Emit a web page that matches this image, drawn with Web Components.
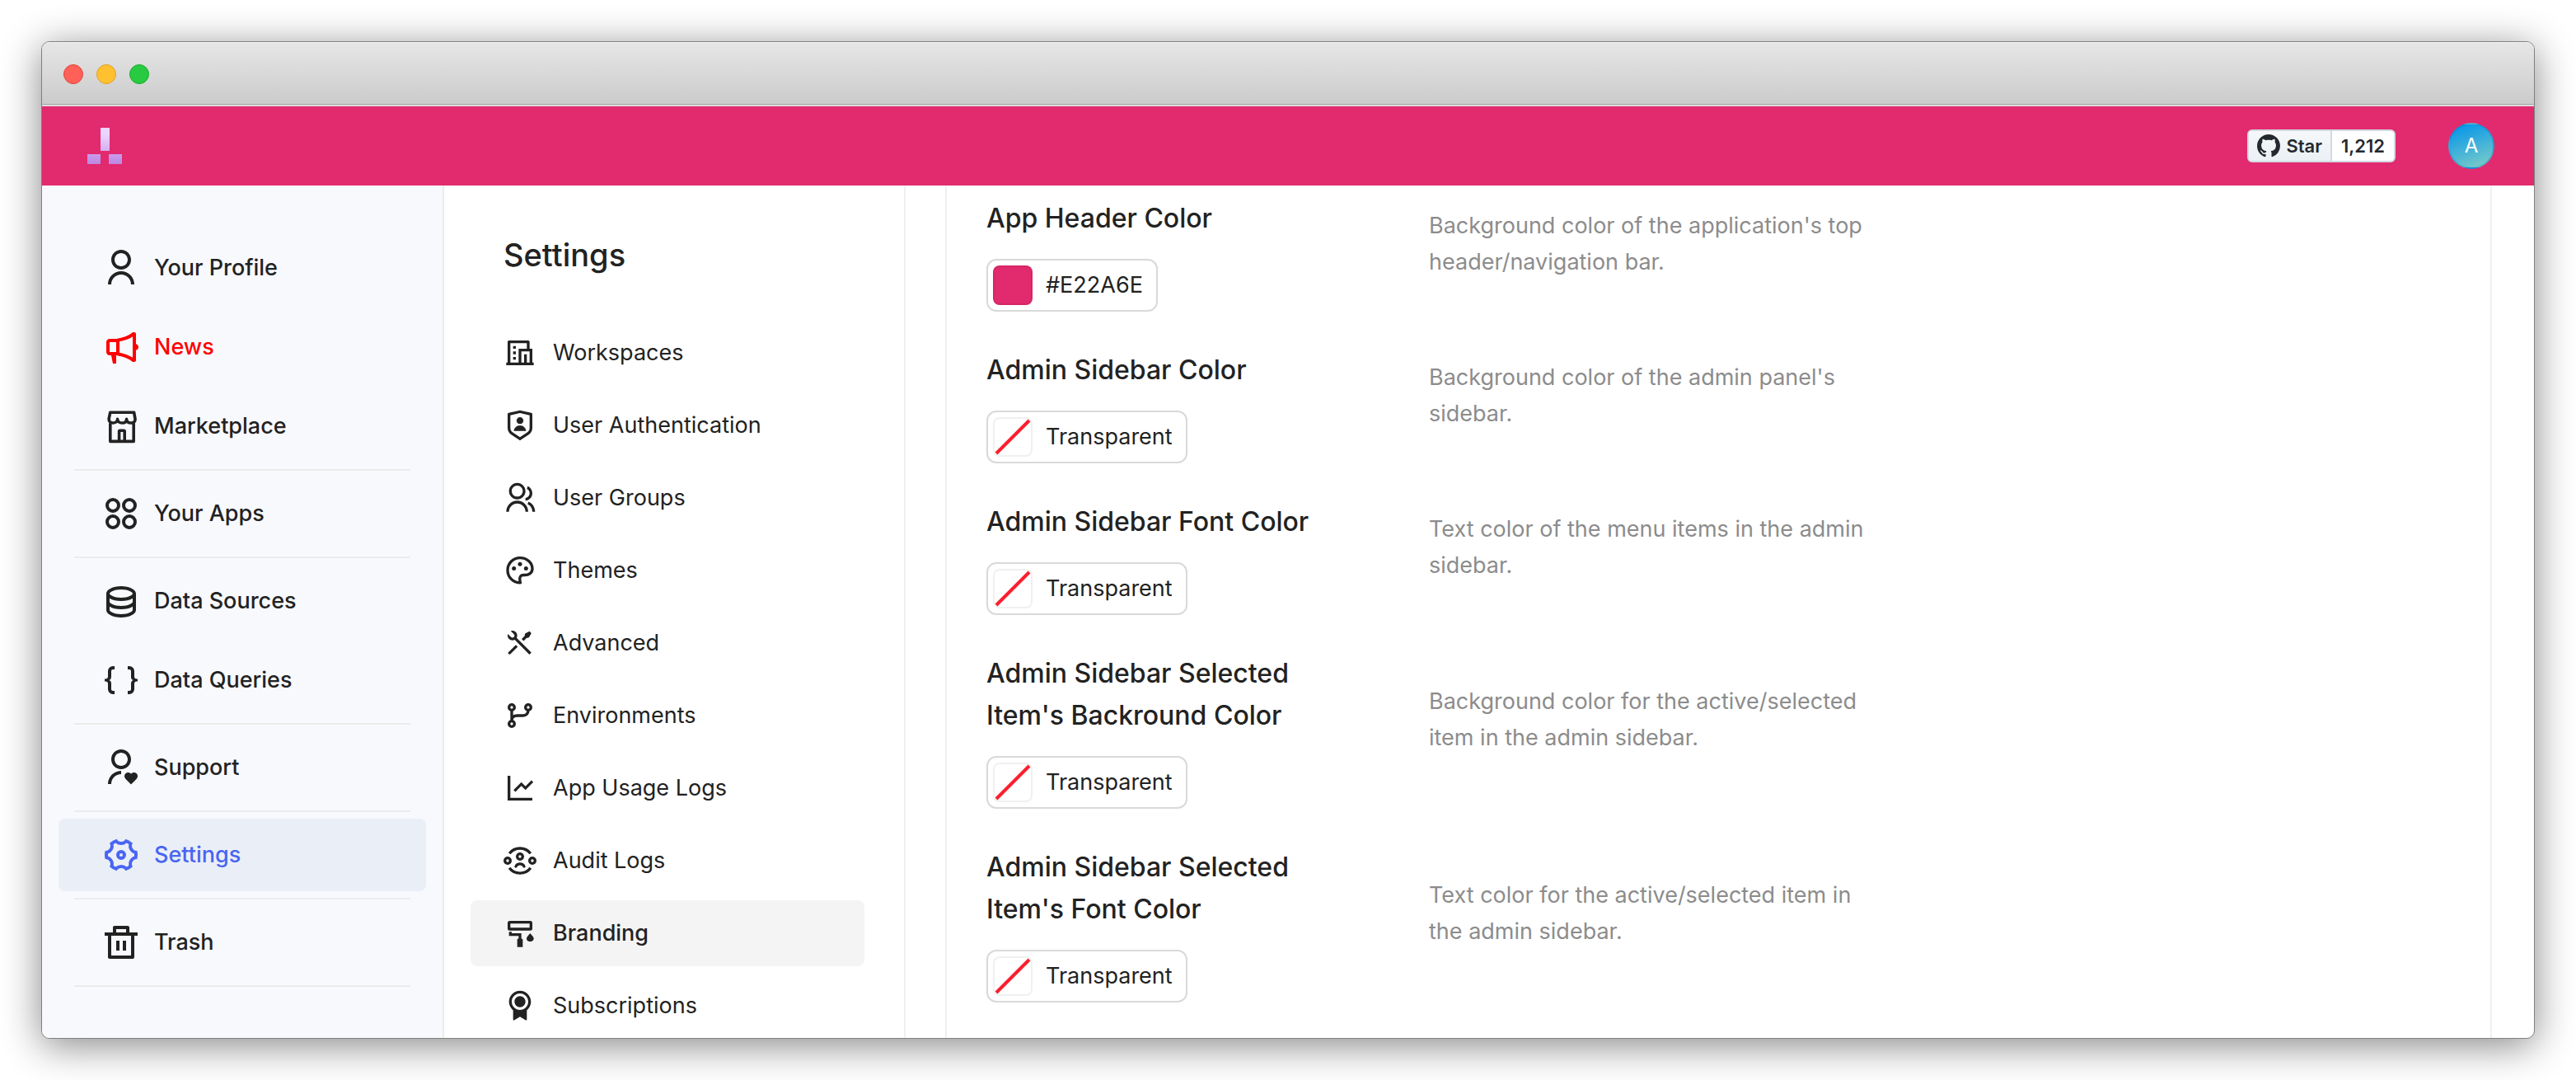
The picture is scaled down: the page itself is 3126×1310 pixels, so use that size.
<!DOCTYPE html>
<html lang="en">
<head>
<meta charset="utf-8">
<title>Settings – Branding</title>
<style>
  html { background: #fff; }
  body {
    margin: 0;
    padding: 50px;
    box-sizing: border-box;
    height: 100vh;
    overflow: hidden;
    font-family: Inter, "Liberation Sans", sans-serif;
    font-size: 27px;
    line-height: 44px;
    color: #222;
    --text: #222;
    --brand: #e22a6e;
    --line: #f0f0f0;
    -webkit-font-smoothing: antialiased;
  }
</style>
</head>
<body>
<browser-window>
  <app-header stars="1,212" initial="A"></app-header>
  <admin-shell>
    <side-nav slot="nav">
      <nav-item icon="user">Your Profile</nav-item>
      <nav-item icon="megaphone" tone="alert">News</nav-item>
      <nav-item icon="store">Marketplace</nav-item>
      <nav-divider></nav-divider>
      <nav-item icon="apps">Your Apps</nav-item>
      <nav-divider></nav-divider>
      <nav-item icon="database">Data Sources</nav-item>
      <nav-item icon="braces">Data Queries</nav-item>
      <nav-divider></nav-divider>
      <nav-item icon="support">Support</nav-item>
      <nav-divider></nav-divider>
      <nav-item icon="gear" selected>Settings</nav-item>
      <nav-divider></nav-divider>
      <nav-item icon="trash">Trash</nav-item>
      <nav-divider></nav-divider>
    </side-nav>
    <settings-menu slot="menu" heading="Settings">
      <menu-entry icon="building">Workspaces</menu-entry>
      <menu-entry icon="shield">User Authentication</menu-entry>
      <menu-entry icon="group">User Groups</menu-entry>
      <menu-entry icon="palette">Themes</menu-entry>
      <menu-entry icon="tools">Advanced</menu-entry>
      <menu-entry icon="branch">Environments</menu-entry>
      <menu-entry icon="chart">App Usage Logs</menu-entry>
      <menu-entry icon="audit">Audit Logs</menu-entry>
      <menu-entry icon="roller" selected>Branding</menu-entry>
      <menu-entry icon="award">Subscriptions</menu-entry>
    </settings-menu>
    <branding-panel>
      <color-field label="App Header Color" value="#E22A6E">Background color of the application's top header/navigation bar.</color-field>
      <color-field label="Admin Sidebar Color">Background color of the admin panel's sidebar.</color-field>
      <color-field label="Admin Sidebar Font Color">Text color of the menu items in the admin sidebar.</color-field>
      <color-field label="Admin Sidebar Selected Item's Backround Color">Background color for the active/selected item in the admin sidebar.</color-field>
      <color-field label="Admin Sidebar Selected Item's Font Color">Text color for the active/selected item in the admin sidebar.</color-field>
    </branding-panel>
  </admin-shell>
</browser-window>

<script>
const USER_HEAD = 'M12 13C8.685 13 6 10.315 6 7C6 3.685 8.685 1 12 1C15.315 1 18 3.685 18 7C18 10.315 15.315 13 12 13ZM12 11C14.21 11 16 9.21 16 7C16 4.79 14.21 3 12 3C9.79 3 8 4.79 8 7C8 9.21 9.79 11 12 11Z';
const fill = d => `<path d="${d}"/>`;
const stroke = (body, w = 2) => `<g fill="none" stroke="currentColor" stroke-width="${w}">${body}</g>`;

const ICONS = {
  user: fill('M4 22C4 17.5817 7.58172 14 12 14C16.4183 14 20 17.5817 20 22H18C18 18.6863 15.3137 16 12 16C8.68629 16 6 18.6863 6 22H4Z' + USER_HEAD),
  megaphone: fill('M9 17C9 17 16 18 19 21H20C20.5523 21 21 20.5523 21 20V13.937C21.8626 13.715 22.5 12.9319 22.5 12C22.5 11.0681 21.8626 10.285 21 10.063V4C21 3.44772 20.5523 3 20 3H19C16 6 9 7 9 7H5C3.89543 7 3 7.89543 3 9V15C3 16.1046 3.89543 17 5 17H6L7 22H9V17ZM11 8.6612C11.6833 8.5146 12.5275 8.31193 13.4393 8.04373C15.1175 7.55014 17.25 6.77262 19 5.57458V18.4254C17.25 17.2274 15.1175 16.4499 13.4393 15.9563C12.5275 15.6881 11.6833 15.4854 11 15.3388V8.6612ZM5 9H9V15H5V9Z'),
  store: stroke('<path stroke-linejoin="round" d="M5.4 3.6H19.8L20.5 7.4C20.7 9.1 19.6 10 18.2 10C16.6 10 15.3 9.3 15.3 7.7C15.3 9.3 14.1 10 12.6 10C11.1 10 9.8 9.3 9.8 7.7C9.8 9.3 8.5 10 7 10C5.6 10 4.4 9.1 4.6 7.4ZM5.4 10.2V21.2H19.6V10.2M10.8 21V15.1C10.8 14.8 11 14.6 11.3 14.6H13.6C13.9 14.6 14.1 14.8 14.1 15.1V21"/>', 1.8),
  apps: stroke('<circle cx="7" cy="7" r="3.5"/><circle cx="17" cy="7" r="3.5"/><circle cx="7" cy="17" r="3.5"/><circle cx="17" cy="17" r="3.5"/>'),
  database: fill('M5 12.5C5 12.8134 5.46101 13.3584 6.53047 13.8931C7.91405 14.5849 9.87677 15 12 15C14.1232 15 16.0859 14.5849 17.4695 13.8931C18.539 13.3584 19 12.8134 19 12.5V10.3287C17.35 11.3482 14.8273 12 12 12C9.17273 12 6.64996 11.3482 5 10.3287V12.5ZM19 15.3287C17.35 16.3482 14.8273 17 12 17C9.17273 17 6.64996 16.3482 5 15.3287V17.5C5 17.8134 5.46101 18.3584 6.53047 18.8931C7.91405 19.5849 9.87677 20 12 20C14.1232 20 16.0859 19.5849 17.4695 18.8931C18.539 18.3584 19 17.8134 19 17.5V15.3287ZM3 17.5V7.5C3 5.01472 7.02944 3 12 3C16.9706 3 21 5.01472 21 7.5V17.5C21 19.9853 16.9706 22 12 22C7.02944 22 3 19.9853 3 17.5ZM12 10C14.1232 10 16.0859 9.58492 17.4695 8.89313C18.539 8.3584 19 7.81342 19 7.5C19 7.18658 18.539 6.6416 17.4695 6.10687C16.0859 5.41508 14.1232 5 12 5C9.87677 5 7.91405 5.41508 6.53047 6.10687C5.46101 6.6416 5 7.18658 5 7.5C5 7.81342 5.46101 8.3584 6.53047 8.89313C7.91405 9.58492 9.87677 10 12 10Z'),
  braces: fill('M4 18v-3.7a1.5 1.5 0 0 0-1.5-1.5H2v-1.6h.5A1.5 1.5 0 0 0 4 9.7V6.5a3 3 0 0 1 3-3h1v2H7a1 1 0 0 0-1 1v3.6A2 2 0 0 1 4.626 12 2 2 0 0 1 6 13.9V17.5a1 1 0 0 0 1 1h1v2H7a3 3 0 0 1-3-3zM20 14.3V17.5a3 3 0 0 1-3 3h-1v-2h1a1 1 0 0 0 1-1v-3.6A2 2 0 0 1 19.374 12 2 2 0 0 1 18 10.1V6.5a1 1 0 0 0-1-1h-1v-2h1a3 3 0 0 1 3 3v3.2a1.5 1.5 0 0 0 1.5 1.5h.5v1.6h-.5a1.5 1.5 0 0 0-1.5 1.5z'),
  support: fill('M17.841 15.659L18.017 15.836L18.1945 15.659C19.0732 14.7803 20.4978 14.7803 21.3765 15.659C22.2552 16.5377 22.2552 17.9623 21.3765 18.841L18.0178 22.1997L14.659 18.841C13.7803 17.9623 13.7803 16.5377 14.659 15.659C15.5377 14.7803 16.9623 14.7803 17.841 15.659ZM12 14V16C8.68629 16 6 18.6863 6 22H4C4 17.6651 7.44784 14.1355 11.7508 14.0038L12 14Z' + USER_HEAD),
  gear: fill('M2 12c0-.865.11-1.703.316-2.504A3 3 0 0 0 4.99 4.867a9.99 9.99 0 0 1 4.335-2.506 3 3 0 0 0 5.348 0 9.99 9.99 0 0 1 4.335 2.506 3 3 0 0 0 2.675 4.63c.206.8.316 1.638.316 2.503 0 .865-.11 1.703-.316 2.504a3 3 0 0 0-2.675 4.629 9.99 9.99 0 0 1-4.335 2.505 3 3 0 0 0-5.348 0 9.99 9.99 0 0 1-4.335-2.505 3 3 0 0 0-2.675-4.63C2.11 13.704 2 12.866 2 12zm4.804 3c.63 1.091.81 2.346.564 3.524.408.29.842.541 1.297.75A4.993 4.993 0 0 1 12 18c1.26 0 2.438.471 3.335 1.274.455-.209.889-.46 1.297-.75A4.993 4.993 0 0 1 17.196 15a4.993 4.993 0 0 1 2.77-2.25 8.126 8.126 0 0 0 0-1.5A4.993 4.993 0 0 1 17.195 9a4.993 4.993 0 0 1-.564-3.524 7.989 7.989 0 0 0-1.297-.75A4.993 4.993 0 0 1 12 6a4.993 4.993 0 0 1-3.335-1.274 7.99 7.99 0 0 0-1.297.75A4.993 4.993 0 0 1 6.804 9a4.993 4.993 0 0 1-2.77 2.25 8.126 8.126 0 0 0 0 1.5A4.993 4.993 0 0 1 6.805 15zM12 15a3 3 0 1 1 0-6 3 3 0 0 1 0 6zm0-2a1 1 0 1 0 0-2 1 1 0 0 0 0 2z'),
  trash: fill('M17 6H22V8H20V21C20 21.5523 19.5523 22 19 22H5C4.44772 22 4 21.5523 4 21V8H2V6H7V3C7 2.44772 7.44772 2 8 2H16C16.5523 2 17 2.44772 17 3V6ZM18 8H6V20H18V8ZM9 11H11V17H9V11ZM13 11H15V17H13V11ZM9 4V6H15V4H9Z'),
  building: fill('M22 21H2V19H3V4C3 3.44772 3.44772 3 4 3H18C18.5523 3 19 3.44772 19 4V9H21V19H22V21ZM17 19H19V11H13V19H15V13H17V19ZM17 9V5H5V19H11V9H17ZM7 11H9V13H7V11ZM7 15H9V17H7V15ZM7 7H9V9H7V7Z'),
  shield: fill('M3.783 2.826L12 1L20.217 2.826C20.674 2.928 21 3.333 21 3.802V13.789C21 15.795 19.997 17.668 18.328 18.781L12 23L5.672 18.781C4.002 17.668 3 15.795 3 13.789V3.802C3 3.333 3.326 2.928 3.783 2.826ZM5 4.604V13.789C5 15.127 5.668 16.375 6.781 17.117L12 20.597L17.219 17.117C18.332 16.375 19 15.127 19 13.789V4.604L12 3.049L5 4.604ZM12 11C10.62 11 9.5 9.88 9.5 8.5S10.62 6 12 6 14.5 7.12 14.5 8.5 13.38 11 12 11ZM7.527 16C7.777 13.75 9.684 12 12 12S16.223 13.75 16.472 16H7.527Z'),
  group: fill('M2 22C2 17.5817 5.58172 14 10 14C14.4183 14 18 17.5817 18 22H16C16 18.6863 13.3137 16 10 16C6.68629 16 4 18.6863 4 22H2ZM10 13C6.685 13 4 10.315 4 7C4 3.685 6.685 1 10 1C13.315 1 16 3.685 16 7C16 10.315 13.315 13 10 13ZM10 11C12.21 11 14 9.21 14 7C14 4.79 12.21 3 10 3C7.79 3 6 4.79 6 7C6 9.21 7.79 11 10 11ZM18.2837 14.7028C21.0644 15.9561 23 18.752 23 22H21C21 19.564 19.5483 17.4671 17.4628 16.5271L18.2837 14.7028ZM17.5962 3.41321C19.5944 4.23703 21 6.20361 21 8.5C21 11.3702 18.8042 13.7252 16 13.9776V11.9646C17.6967 11.7222 19 10.264 19 8.5C19 7.11935 18.2016 5.92603 17.0387 5.35635L17.5962 3.41321Z'),
  palette: stroke('<path stroke-linejoin="round" d="M12 2.8C7 2.8 3 6.8 3 11.8C3 16.8 6.9 20.9 12.3 20.9C11.6 18.4 11.8 17 12.4 16.2C12.9 15.5 13.8 15.2 15 15.3C18.6 15.5 21 13.6 21 10.8C21 6.4 17 2.8 12 2.8Z"/>') + '<circle cx="7.6" cy="10.5" r="1.5"/><circle cx="12" cy="7.4" r="1.5"/><circle cx="16.4" cy="10.5" r="1.5"/>',
  tools: fill('M5.32943 3.27158C6.56252 2.8332 7.9923 3.10749 8.97927 4.09446C10.1002 5.21537 10.3019 6.90741 9.5843 8.23385L20.293 18.9437L18.8788 20.3579L8.16982 9.64875C6.84325 10.3669 5.15069 10.1654 4.02952 9.04421C3.04227 8.05696 2.7681 6.62665 3.20701 5.39332L5.44373 7.63C6.02952 8.21578 6.97927 8.21578 7.56505 7.63C8.15084 7.04421 8.15084 6.09446 7.56505 5.50868L5.32943 3.27158ZM15.6968 5.15512L18.8788 3.38736L20.293 4.80157L18.5252 7.98355L16.7574 8.3371L14.6361 10.4584L13.2219 9.04421L15.3432 6.92289L15.6968 5.15512ZM8.97927 13.2868L10.3935 14.7011L5.09018 20.0044C4.69966 20.3949 4.06649 20.3949 3.67597 20.0044C3.31334 19.6417 3.28744 19.0699 3.59826 18.6774L3.67597 18.5902L8.97927 13.2868Z'),
  branch: stroke('<circle cx="6" cy="6" r="2"/><circle cx="18" cy="6" r="2"/><circle cx="6" cy="18" r="2"/><path d="M6 8V16M18 8C18 10.4 16.6 12 14.2 12H10.2C7.8 12 6 13 6 15.4"/>'),
  chart: fill('M5 3V19H21V21H3V3H5ZM20.2929 6.29289L21.7071 7.70711L16 13.4142L13 10.415L8.70711 14.7071L7.29289 13.2929L13 7.58579L16 10.585L20.2929 6.29289Z'),
  audit: stroke('<circle cx="12" cy="9" r="2"/><circle cx="3" cy="12" r="2"/><circle cx="21" cy="12" r="2"/><path stroke-linecap="round" d="M9 16.2C10 13.7 14 13.7 15 16.2"/><path d="M4.3 6.8C8 1.7 16 1.7 19.7 6.8M4.3 17.2C8 22.3 16 22.3 19.7 17.2"/>'),
  roller: stroke('<rect x="4" y="4" width="16" height="5" rx=".5"/><path d="M5 11V13H12V17"/>') + fill('M10.6 16H13.4C13.8 16 14 16.3 14 16.6V22H10V16.6C10 16.3 10.2 16 10.6 16ZM19.4 12L21.3 14.2C23 16.1 21.5 18 19.4 18C17.3 18 15.9 16.1 17.5 14.2Z'),
  award: fill('M17 15.2454V22.1169C17 22.393 16.7761 22.617 16.5 22.617C16.4094 22.617 16.3205 22.5923 16.2428 22.5457L12 20L7.75725 22.5457C7.52046 22.6877 7.21333 22.6109 7.07125 22.3742C7.02463 22.2964 7 22.2075 7 22.1169V15.2454C5.17107 13.7793 4 11.5264 4 9C4 4.58172 7.58172 1 12 1C16.4183 1 20 4.58172 20 9C20 11.5264 18.8289 13.7793 17 15.2454ZM12 15C15.3137 15 18 12.3137 18 9C18 5.68629 15.3137 3 12 3C8.68629 3 6 5.68629 6 9C6 12.3137 8.68629 15 12 15ZM12 13C9.79086 13 8 11.2091 8 9C8 6.79086 9.79086 5 12 5C14.2091 5 16 6.79086 16 9C16 11.2091 14.2091 13 12 13Z')
};

/* Base class: clones the subclass markup into an open shadow root. */
class UiElement extends HTMLElement {
  connectedCallback() {
    if (this.shadowRoot) return;
    const t = document.createElement('template');
    t.innerHTML = `<style>*{box-sizing:border-box}${this.styles()}</style>${this.markup()}`;
    this.attachShadow({ mode: 'open' }).append(t.content.cloneNode(true));
  }
}

customElements.define('ui-icon', class extends UiElement {
  styles() { return `:host{display:block;flex:none;width:var(--icon-size,40px);height:var(--icon-size,40px)} svg{display:block;width:100%;height:100%}`; }
  markup() { return `<svg viewBox="0 0 24 24" fill="currentColor" aria-hidden="true">${ICONS[this.getAttribute('name')]}</svg>`; }
});

customElements.define('browser-window', class extends UiElement {
  styles() { return `
    :host{display:flex;flex-direction:column;height:100%;box-sizing:border-box;overflow:hidden;
      border:1px solid #808080;border-radius:10px;background:#fff;
      box-shadow:0 8px 48px rgba(0,0,0,.48)}
    .bar{flex:none;display:flex;align-items:center;gap:16px;height:78px;padding:0 26px;
      background:linear-gradient(#e6e6e6,#cbcbcb);
      border-top:1px solid #f4f4f4;border-bottom:2px solid #dcdcdc;
      box-shadow:inset 0 -1px #a6a6a6}
    i{width:24px;height:24px;border-radius:50%;border:1px solid}
    .close{background:#ff6058;border-color:#e2463f}
    .min{background:#ffc130;border-color:#e0a028}
    .max{background:#27ca40;border-color:#1dad2b}
    .page{flex:1;min-height:0;display:flex;flex-direction:column}`; }
  markup() { return `<div class="bar"><i class="close"></i><i class="min"></i><i class="max"></i></div><div class="page"><slot></slot></div>`; }
});

customElements.define('app-header', class extends UiElement {
  styles() { return `
    :host{flex:none;display:flex;align-items:center;justify-content:space-between;height:96px;
      padding:0 48px 0 55px;background:var(--brand)}
    a{color:inherit;text-decoration:none}
    .logo svg{display:block}
    .right{display:flex;align-items:center;gap:64px}
    .star{display:flex;height:40px;border:2px solid #d2d9e0;border-radius:6px;background:#fff;
      font-size:22px;line-height:36px;font-weight:600;color:#24292f;overflow:hidden}
    .star a{display:flex;align-items:center;padding:0 11px}
    .star .act{gap:7px;padding:0 10px;background:linear-gradient(#f6f8fa,#ebf0f4);border-right:2px solid #d2d9e0}
    .avatar{width:56px;height:56px;border-radius:50%;border:2px solid rgba(0,120,190,.25);padding:0;
      background:linear-gradient(160deg,#0b98e8 10%,#7bccc8 95%);color:#fff;font:24px/52px Inter,sans-serif;text-align:center}`; }
  markup() { return `
    <a class="logo" href="#" aria-label="Home"><svg width="42" height="44" viewBox="0 0 42 44">
      <defs><linearGradient id="a" x2="0" y2="1"><stop offset=".3" stop-color="#ecd4ff"/><stop offset="1" stop-color="#d5aef0"/></linearGradient>
      <linearGradient id="b" x2="0" y2="1"><stop stop-color="#ca9cec"/><stop offset="1" stop-color="#bb88e0"/></linearGradient></defs>
      <rect x="16" width="11" height="28" fill="url(#a)"/><rect y="32" width="16" height="12" fill="url(#b)"/><rect x="26" y="32" width="16" height="12" fill="url(#b)"/></svg></a>
    <div class="right">
      <div class="star"><a class="act" href="#"><svg width="28" height="28" viewBox="0 0 16 16" fill="currentColor" aria-hidden="true"><path d="M8 0C3.58 0 0 3.58 0 8c0 3.54 2.29 6.53 5.47 7.59.4.07.55-.17.55-.38 0-.19-.01-.82-.01-1.49-2.01.37-2.53-.49-2.69-.94-.09-.23-.48-.94-.82-1.13-.28-.15-.68-.52-.01-.53.63-.01 1.08.58 1.23.82.72 1.21 1.87.87 2.33.66.07-.52.28-.87.51-1.07-1.78-.2-3.64-.89-3.64-3.95 0-.87.31-1.59.82-2.15-.08-.2-.36-1.02.08-2.12 0 0 .67-.21 2.2.82.64-.18 1.32-.27 2-.27s1.36.09 2 .27c1.53-1.04 2.2-.82 2.2-.82.44 1.1.16 1.92.08 2.12.51.56.82 1.27.82 2.15 0 3.07-1.87 3.75-3.65 3.95.29.25.54.73.54 1.48 0 1.07-.01 1.93-.01 2.2 0 .21.15.46.55.38A8.01 8.01 0 0 0 16 8c0-4.42-3.58-8-8-8z"/></svg><span>Star</span></a><a href="#">${this.getAttribute('stars')}</a></div>
      <button class="avatar" type="button">${this.getAttribute('initial')}</button>
    </div>`; }
});

customElements.define('admin-shell', class extends UiElement {
  styles() { return `
    :host{flex:1;min-height:0;display:flex;overflow:hidden}
    slot[name=nav]::slotted(*){flex:0 0 488px}
    slot[name=menu]::slotted(*){flex:0 0 560px}
    main{flex:1;min-width:0;display:flex;padding:0 51px 0 48px}`; }
  markup() { return `<slot name="nav"></slot><slot name="menu"></slot><main><slot></slot></main>`; }
});

customElements.define('side-nav', class extends UiElement {
  styles() { return `:host{display:block;box-sizing:border-box;background:#f8f9fd;border-right:2px solid #ebebeb}
    nav{display:flex;flex-direction:column;gap:8px;padding:56px 20px}`; }
  markup() { return `<nav aria-label="Admin"><slot></slot></nav>`; }
});

customElements.define('nav-item', class extends UiElement {
  styles() { return `
    :host{display:block;--icon-size:48px;color:var(--text)}
    :host([tone=alert]){color:#f00}
    :host([selected]){color:#4965f2}
    a{display:flex;align-items:center;gap:16px;height:88px;padding:0 52px;border-radius:8px;
      color:inherit;text-decoration:none;font-weight:500}
    :host([selected]) a{background:#eaeff7}`; }
  markup() { return `<a href="#"><ui-icon name="${this.getAttribute('icon')}"></ui-icon><span><slot></slot></span></a>`; }
});

customElements.define('nav-divider', class extends UiElement {
  styles() { return `:host{display:block;height:2px;margin:0 19px;background:#ebebeb}`; }
  markup() { return ``; }
});

customElements.define('settings-menu', class extends UiElement {
  styles() { return `
    :host{display:block;box-sizing:border-box;border-right:2px solid var(--line);padding:60px 48px 0 32px}
    h2{margin:0 0 55px;padding-left:40px;font-size:38px;line-height:48px;font-weight:500;color:var(--text)}
    nav{display:flex;flex-direction:column;gap:8px}`; }
  markup() { return `<h2>${this.getAttribute('heading')}</h2><nav aria-label="Settings"><slot></slot></nav>`; }
});

customElements.define('menu-entry', class extends UiElement {
  styles() { return `
    :host{display:block}
    a{display:flex;align-items:center;gap:20px;height:80px;padding:0 40px;border-radius:8px;
      color:var(--text);text-decoration:none}
    :host([selected]) a{background:#f4f4f4;font-weight:500}`; }
  markup() { return `<a href="#"><ui-icon name="${this.getAttribute('icon')}"></ui-icon><span><slot></slot></span></a>`; }
});

customElements.define('branding-panel', class extends UiElement {
  styles() { return `
    :host{flex:1;display:flex;flex-direction:column;gap:45px;box-sizing:border-box;overflow:hidden;
      padding:14px 48px;border:2px solid var(--line);border-width:0 2px}`; }
  markup() { return `<slot></slot>`; }
});

customElements.define('color-field', class extends UiElement {
  styles() { return `
    :host{display:grid;grid-template-columns:minmax(0,537px) minmax(0,550px);align-items:center}
    .control{display:flex;flex-direction:column;align-items:flex-start;gap:24px}
    label{max-width:420px;font-size:32px;line-height:51px;font-weight:500;color:var(--text)}
    button{display:flex;align-items:center;gap:16px;height:64px;padding:0 16px 0 6px;
      border:2px solid #d9d9d9;border-radius:12px;background:#fff;color:var(--text);
      font:inherit;line-height:44px}
    svg{display:block}
    p{margin:0 0 26px;color:#8c8c8c}`; }
  markup() {
    const v = this.getAttribute('value');
    const swatch = v
      ? `<rect width="48" height="48" rx="8" fill="${v}"/><rect x="1" y="1" width="46" height="46" rx="7" fill="none" stroke="#000" stroke-opacity=".06" stroke-width="2"/>`
      : `<rect x="1" y="1" width="46" height="46" rx="7" fill="#fff" stroke="#f0f0f0" stroke-width="2"/><path d="M4 44L44 4" stroke="#fa1f2f" stroke-width="4"/>`;
    return `<div class="control"><label for="pick">${this.getAttribute('label')}</label>
      <button id="pick" type="button"><svg width="48" height="48" viewBox="0 0 48 48" aria-hidden="true">${swatch}</svg><span>${v || 'Transparent'}</span></button></div>
      <p><slot></slot></p>`;
  }
});
</script>
</body>
</html>
